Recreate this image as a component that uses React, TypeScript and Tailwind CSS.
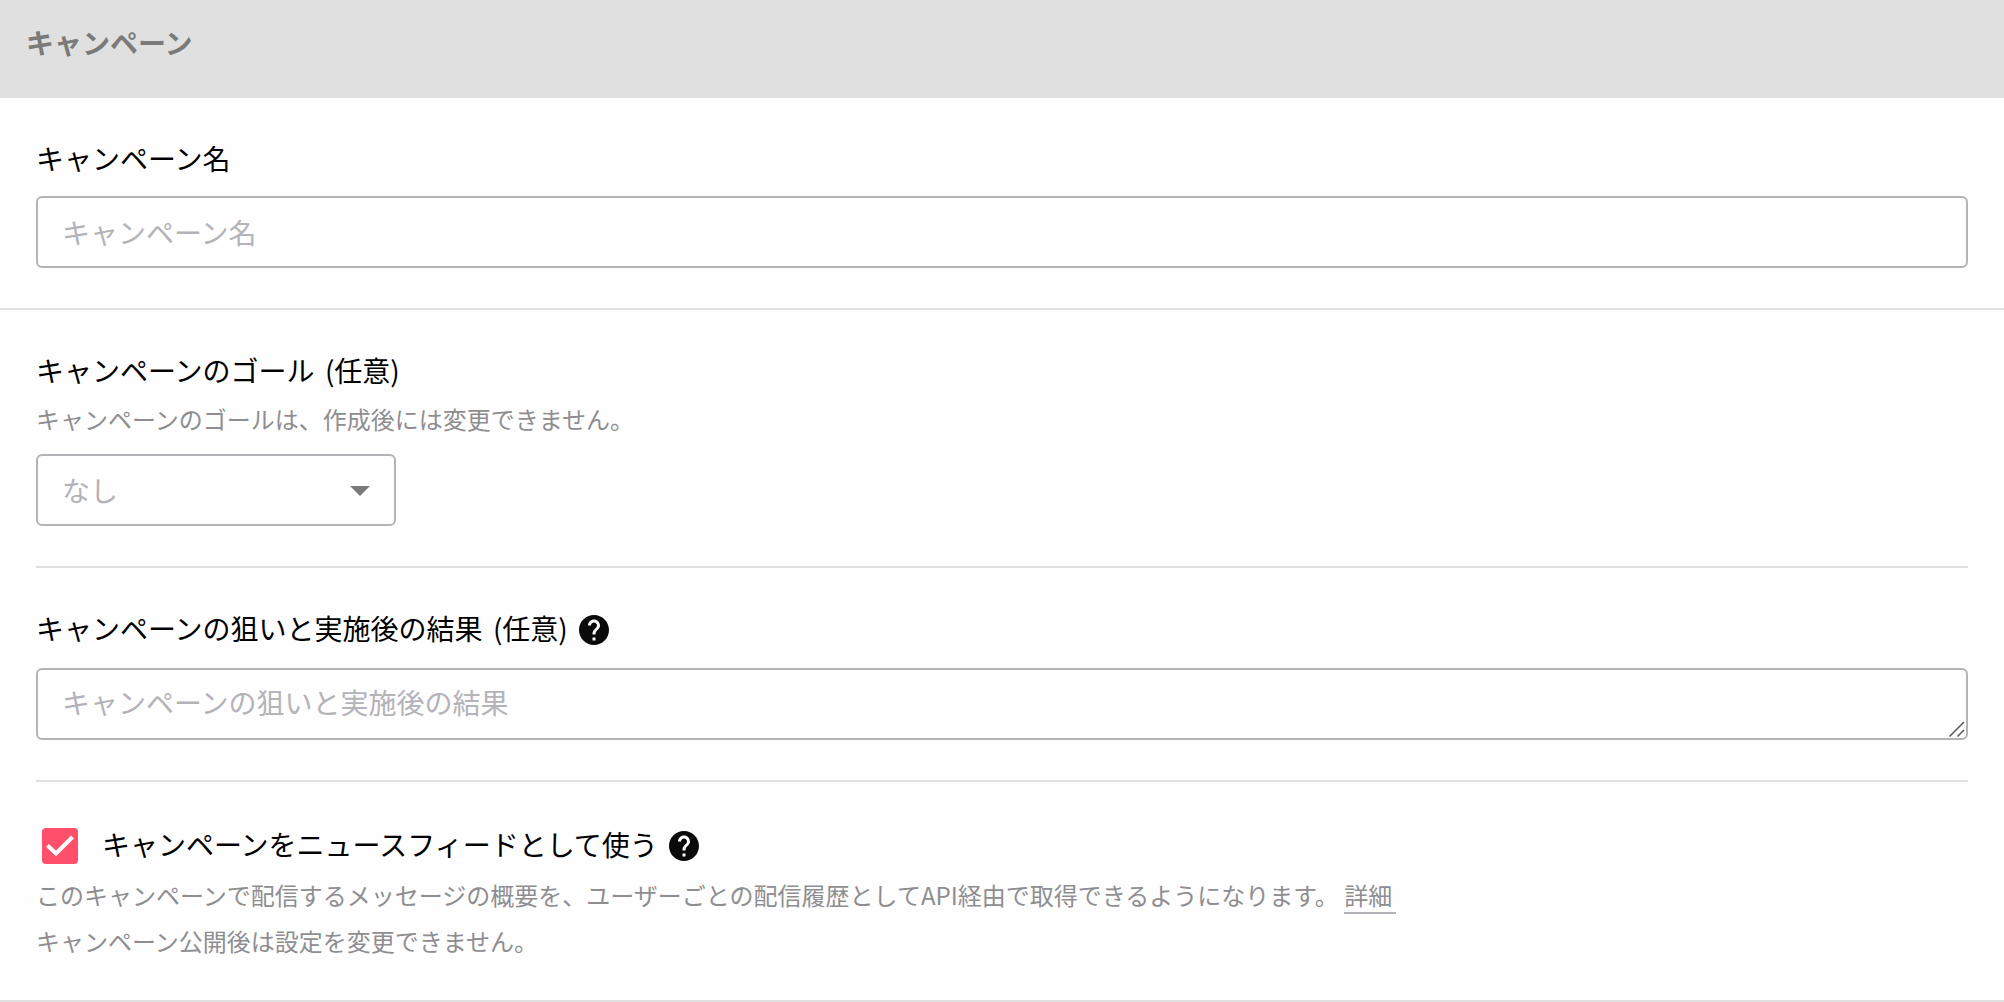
import React from 'react';
import { MdHelp } from 'react-icons/md';

const fieldClass =
  'block w-full h-[72px] rounded-md border-2 border-[#b3b3b8] bg-transparent px-6 text-[28px] text-black placeholder:text-[#b3b3b8] placeholder:opacity-100';

const HelpButton = () => (
  <button type="button" aria-label="ヘルプ" className="mt-1 shrink-0">
    <MdHelp className="size-9 text-[#0a0a0a]" />
  </button>
);

const App = () => {
  return (
    <div className='bg-[#fefefe] font-["Noto_Sans_CJK_JP",sans-serif] text-[28px] leading-10 text-black'>
      <header className="h-[98px] bg-[#e0e0e0] px-[26px] pt-[22px]">
        <h1 className="font-bold text-[#7a7a7a]">キャンペーン</h1>
      </header>

      <form>
        {/* Campaign name */}
        <section className="border-b-2 border-[#e0e0e0] px-9 py-10">
          <label htmlFor="name" className="block">
            キャンペーン名
          </label>
          <input id="name" type="text" placeholder="キャンペーン名" className={`${fieldClass} mt-[18px]`} />
        </section>

        <div className="border-b-2 border-[#e0e0e0] px-9">
          {/* Goal */}
          <section className="border-b-2 border-[#e0e0e0] py-10">
            <label htmlFor="goal" className="block">
              キャンペーンのゴール <span className="ml-1">(任意)</span>
            </label>
            <p className="mt-1.5 text-2xl leading-[46px] text-[#8e8e91]">
              キャンペーンのゴールは、作成後には変更できません。
            </p>
            <div className="relative mt-3 w-[360px]">
              <select
                id="goal"
                defaultValue=""
                className="block h-[72px] w-full appearance-none rounded-md border-2 border-[#b3b3b8] bg-transparent px-6 text-[#b3b3b8]"
              >
                <option value="">なし</option>
              </select>
              <svg viewBox="0 0 20 10" className="pointer-events-none absolute right-[26px] top-8 h-[10px] w-5 fill-[#7a7a7a]">
                <path d="M0 0h20L10 10z" />
              </svg>
            </div>
          </section>

          {/* Aim and result */}
          <section className="border-b-2 border-[#e0e0e0] py-10">
            <div className="flex items-start gap-2">
              <label htmlFor="aim">
                キャンペーンの狙いと実施後の結果 <span className="ml-1">(任意)</span>
              </label>
              <HelpButton />
            </div>
            <div className="relative mt-5">
              <textarea
                id="aim"
                rows={1}
                placeholder="キャンペーンの狙いと実施後の結果"
                className={`${fieldClass} resize-none py-3`}
              />
              {/* Resize grip */}
              <svg
                viewBox="0 0 16 16"
                className="pointer-events-none absolute bottom-[3px] right-[3px] size-4 fill-none stroke-[#555] stroke-[1.5]"
              >
                <path d="M0.5 15.5L15 1M8.5 15.5L15 9" />
              </svg>
            </div>
          </section>

          {/* News feed */}
          <section className="pb-9 pt-[42px]">
            <div className="flex items-start">
              <span className="relative ml-1.5 mr-6 mt-1 size-9">
                <input
                  id="feed"
                  type="checkbox"
                  defaultChecked
                  className="block size-9 appearance-none rounded bg-[#ff4f6a]"
                />
                <svg viewBox="0 0 36 36" className="pointer-events-none absolute inset-0 size-9 fill-none stroke-white stroke-[4]">
                  <path d="M5.5 17.5L14 25.5L30.5 9" />
                </svg>
              </span>
              <label htmlFor="feed" className="mr-2">
                キャンペーンをニュースフィードとして使う
              </label>
              <HelpButton />
            </div>
            <p className="mt-2 text-2xl leading-[46px] text-[#8e8e91]">
              このキャンペーンで配信するメッセージの概要を、ユーザーごとの配信履歴としてAPI経由で取得できるようになります。{' '}
              <a href="#" className="border-b-2 border-[#b3b3b8] pr-1">
                詳細
              </a>
              <br />
              キャンペーン公開後は設定を変更できません。
            </p>
          </section>
        </div>
      </form>
    </div>
  );
};

export default App;
